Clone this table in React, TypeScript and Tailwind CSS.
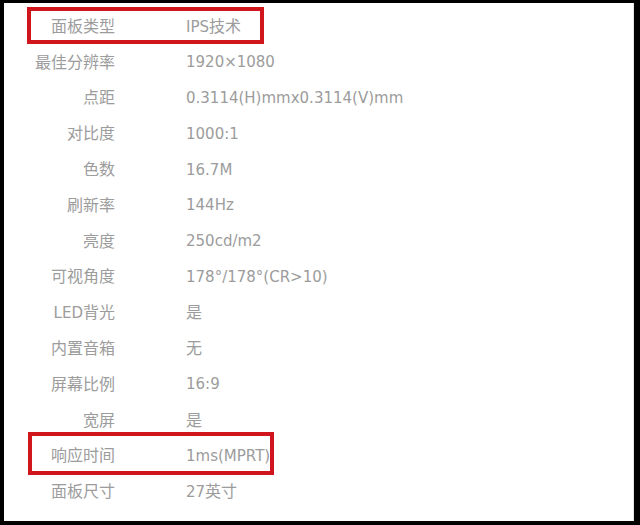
import React from "react";

const rows: { label: React.ReactNode; value: React.ReactNode }[] = [
  { label: <C>面板类型</C>, value: <>IPS<C>技术</C></> },
  { label: <C>最佳分辨率</C>, value: "1920×1080" },
  { label: <C>点距</C>, value: "0.3114(H)mmx0.3114(V)mm" },
  { label: <C>对比度</C>, value: "1000:1" },
  { label: <C>色数</C>, value: "16.7M" },
  { label: <C>刷新率</C>, value: "144Hz" },
  { label: <C>亮度</C>, value: "250cd/m2" },
  { label: <C>可视角度</C>, value: "178°/178°(CR>10)" },
  { label: <>LED<C>背光</C></>, value: <C>是</C> },
  { label: <C>内置音箱</C>, value: <C>无</C> },
  { label: <C>屏幕比例</C>, value: "16:9" },
  { label: <C>宽屏</C>, value: <C>是</C> },
  { label: <C>响应时间</C>, value: "1ms(MPRT)" },
  { label: <C>面板尺寸</C>, value: <>27<C>英寸</C></> },
];

function C({ children }: { children: React.ReactNode }) {
  return <span className="text-[16px]">{children}</span>;
}

export default function App() {
  return (
    <div className="relative w-[640px] h-[525px] bg-black overflow-hidden">
      <div
        className="absolute left-[4px] top-[3px] right-[6px] bottom-[4px] bg-white border-r border-[#e6e6e6] pt-[6px]"
        style={{ fontFamily: '"DejaVu Sans", "Noto Sans CJK SC", sans-serif' }}
      >
        {rows.map((r, i) => (
          <div key={i} className="flex items-center h-[35.8px] text-[15px] text-[#9c9c9c] leading-none">
            <div className="w-[111px] text-right shrink-0">{r.label}</div>
            <div className="ml-[71px] whitespace-nowrap">{r.value}</div>
          </div>
        ))}
      </div>
      <div className="absolute left-[27px] top-[7px] w-[237px] h-[37px] border-[4px] border-[#d0161c]" />
      <div className="absolute left-[28px] top-[432px] w-[246px] h-[43px] border-[4px] border-[#d0161c]" />
    </div>
  );
}
